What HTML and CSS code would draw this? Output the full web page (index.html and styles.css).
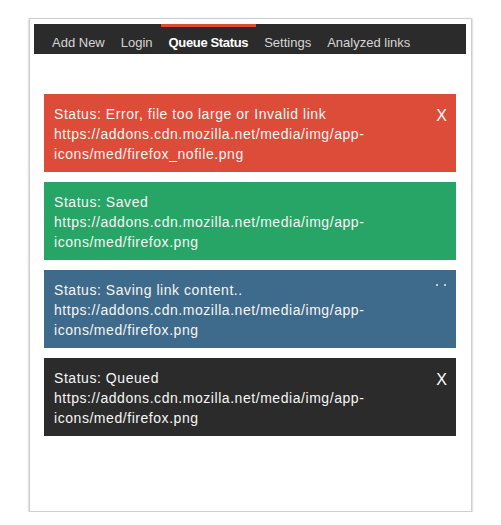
FILE: index.html
```html
<!DOCTYPE html>
<html>
<head>
<meta charset="utf-8">
<link rel="stylesheet" href="styles.css">
</head>
<body>
<div class="frame">
  <nav class="nav">
    <a class="nav-item">Add New</a>
    <a class="nav-item">Login</a>
    <a class="nav-item active">Queue Status</a>
    <a class="nav-item">Settings</a>
    <a class="nav-item">Analyzed links</a>
  </nav>
  <div class="list">
    <div class="card error">
      <div class="text">Status: Error, file too large or Invalid link<br>https://addons.cdn.mozilla.net/media/img/app-<br>icons/med/firefox_nofile.png</div>
      <span class="close">X</span>
    </div>
    <div class="card saved">
      <div class="text">Status: Saved<br>https://addons.cdn.mozilla.net/media/img/app-<br>icons/med/firefox.png</div>
    </div>
    <div class="card saving">
      <div class="text">Status: Saving link content..<br>https://addons.cdn.mozilla.net/media/img/app-<br>icons/med/firefox.png</div>
      <span class="dots"><i></i><i></i></span>
    </div>
    <div class="card queued">
      <div class="text">Status: Queued<br>https://addons.cdn.mozilla.net/media/img/app-<br>icons/med/firefox.png</div>
      <span class="close">X</span>
    </div>
  </div>
</div>
</body>
</html>
```

FILE: styles.css
```css
html, body {
  margin: 0;
  padding: 0;
  background: #fff;
}

body {
  font-family: "Liberation Sans", Arial, sans-serif;
}

.frame {
  margin: 18px 0 0 29px;
  width: 432px;
  height: 487px;
  padding: 5px 5px 0 4px;
  border: 1px solid #cfcfcf;
  box-shadow: 0 1px 2px rgba(0, 0, 0, 0.35);
  background: #fff;
}

.nav {
  display: flex;
  height: 30px;
  padding-left: 10px;
  background: #2b2b2b;
}

.nav-item {
  display: block;
  padding: 4px 8px 0;
  border-top: 3px solid transparent;
  font-size: 13px;
  line-height: 23px;
  color: #d6d6d6;
}

.nav-item.active {
  border-top-color: #dd4b39;
  color: #fff;
  font-weight: bold;
  letter-spacing: -0.35px;
}

.list {
  display: flex;
  flex-direction: column;
  gap: 10px;
  margin: 40px 10px 0;
}

.card {
  display: flex;
  justify-content: space-between;
  align-items: flex-start;
  height: 78px;
  box-sizing: border-box;
  padding: 10px 9px 8px 10px;
  color: #f6f6f6;
}

.text {
  font-size: 14px;
  line-height: 20px;
  letter-spacing: 0.55px;
}

.close {
  font-size: 16px;
  line-height: 20px;
  margin-top: 2px;
  color: #fff;
}

.dots {
  display: flex;
  gap: 6px;
  margin-top: 4px;
  margin-right: 1px;
}

.dots i {
  display: block;
  width: 2px;
  height: 2px;
  background: #b9d0e2;
}

.error { background: #dd4b39; }
.saved { background: #27a566; }
.saving { background: #3e6a8b; }
.queued { background: #2b2b2b; }
```
